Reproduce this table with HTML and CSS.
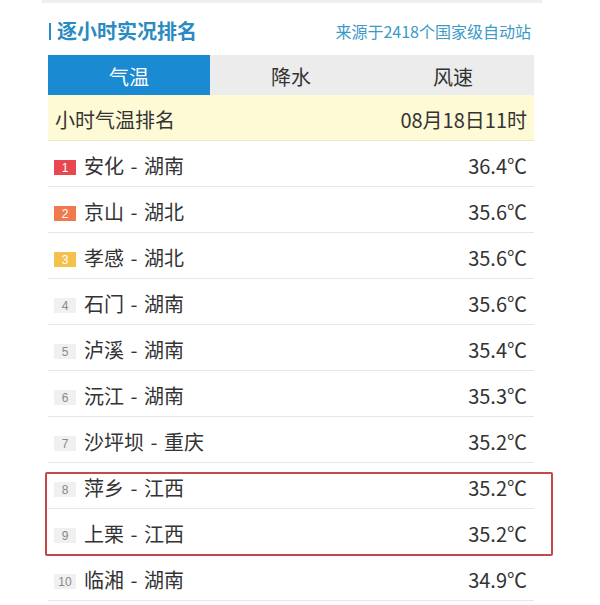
FILE: index.html
```html
<!DOCTYPE html>
<html lang="zh">
<head>
<meta charset="utf-8">
<link rel="stylesheet" href="styles.css">
</head>
<body>
<div class="topband"></div>
<div class="wrap">
  <div class="head">
    <div class="title"><span class="bar"></span>逐小时实况排名</div>
    <div class="source">来源于2418个国家级自动站</div>
  </div>
  <div class="tabs">
    <div class="tab active">气温</div>
    <div class="tab">降水</div>
    <div class="tab">风速</div>
  </div>
  <div class="sub">
    <span>小时气温排名</span>
    <span>08月18日11时</span>
  </div>
  <div class="list">
    <div class="row"><span class="name"><span class="rank r1">1</span>安化 - 湖南</span><span class="val">36.4℃</span></div>
    <div class="row"><span class="name"><span class="rank r2">2</span>京山 - 湖北</span><span class="val">35.6℃</span></div>
    <div class="row"><span class="name"><span class="rank r3">3</span>孝感 - 湖北</span><span class="val">35.6℃</span></div>
    <div class="row"><span class="name"><span class="rank">4</span>石门 - 湖南</span><span class="val">35.6℃</span></div>
    <div class="row"><span class="name"><span class="rank">5</span>泸溪 - 湖南</span><span class="val">35.4℃</span></div>
    <div class="row"><span class="name"><span class="rank">6</span>沅江 - 湖南</span><span class="val">35.3℃</span></div>
    <div class="row"><span class="name"><span class="rank">7</span>沙坪坝 - 重庆</span><span class="val">35.2℃</span></div>
    <div class="row"><span class="name"><span class="rank">8</span>萍乡 - 江西</span><span class="val">35.2℃</span></div>
    <div class="row"><span class="name"><span class="rank">9</span>上栗 - 江西</span><span class="val">35.2℃</span></div>
    <div class="row"><span class="name"><span class="rank">10</span>临湘 - 湖南</span><span class="val">34.9℃</span></div>
    <div class="highlight"></div>
  </div>
</div>
</body>
</html>
```

FILE: styles.css
```css
html, body {
  margin: 0;
  padding: 0;
  background: #fff;
}
body {
  width: 600px;
  height: 605px;
  overflow: hidden;
  font-family: "Noto Sans CJK SC", "Noto Sans", sans-serif;
  color: #333;
}
.topband {
  margin-left: 42px;
  width: 500px;
  height: 3px;
  background: #efefef;
}
.wrap {
  margin-left: 48px;
  width: 486px;
}
.head {
  height: 48px;
  padding-top: 4px;
  display: flex;
  align-items: center;
  justify-content: space-between;
}
.title {
  display: flex;
  align-items: center;
  font-size: 20px;
  font-weight: bold;
  color: #2a8bc2;
  line-height: 24px;
}
.bar {
  display: inline-block;
  width: 2px;
  height: 17px;
  background: #2a8bc2;
  margin-left: 1px;
  margin-right: 6px;
}
.source {
  font-size: 16px;
  color: #3c9ac8;
  margin-right: 3px;
  line-height: 20px;
}
.tabs {
  display: grid;
  grid-template-columns: 1fr 1fr 1fr;
  height: 40px;
  background: #ececec;
}
.tab {
  display: flex;
  align-items: center;
  justify-content: center;
  padding-top: 2px;
  font-size: 20px;
  color: #333;
}
.tab.active {
  background: #1a8bd2;
  color: #fff;
}
.sub {
  height: 42px;
  padding: 3px 7px 0 7px;
  background: #fdfad5;
  border-bottom: 1px solid #ebe7c8;
  display: flex;
  align-items: center;
  justify-content: space-between;
  font-size: 20px;
}
.list {
  position: relative;
}
.row {
  height: 42px;
  padding: 3px 7px 0 6px;
  border-bottom: 1px solid #e6e6e6;
  display: flex;
  align-items: center;
  justify-content: space-between;
  font-size: 20px;
}
.name {
  display: flex;
  align-items: center;
  word-spacing: 2px;
}
.rank {
  display: inline-flex;
  align-items: center;
  justify-content: center;
  width: 22px;
  height: 15px;
  margin-top: 5px;
  margin-right: 8px;
  background: #f0f0f0;
  color: #888;
  font-family: "Liberation Sans", sans-serif;
  font-size: 12px;
}
.rank.r1 { background: #e8474f; color: #fff; }
.rank.r2 { background: #ef7a4f; color: #fff; }
.rank.r3 { background: #f4c24c; color: #fff; }
.highlight {
  position: absolute;
  left: -3px;
  top: 331px;
  width: 504px;
  height: 80px;
  border: 2px solid #c2484a;
  border-radius: 2px;
}
```
